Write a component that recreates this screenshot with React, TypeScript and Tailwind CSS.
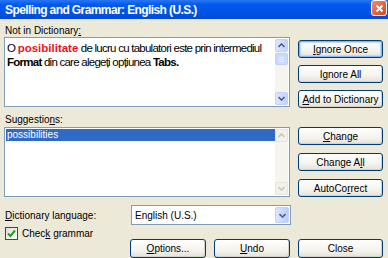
import { ReactNode } from 'react';

const uiFont = { fontFamily: '"Liberation Sans", Arial, sans-serif' };

function Btn({ children, focused = false, className = '' }: { children: ReactNode; focused?: boolean; className?: string }) {
  return (
    <div
      className={`h-[18px] rounded-[3px] border border-[#003c74] bg-[linear-gradient(180deg,#ffffff_0%,#f4f3ee_60%,#e3e1d7_100%)] flex items-center justify-center text-[10px] text-black whitespace-nowrap ${
        focused ? 'shadow-[inset_0_0_0_1px_#8fb3f0,inset_0_0_0_2px_#c6d8f8]' : 'shadow-[inset_-1px_-1px_0_#d6d0c5]'
      } ${className}`}
    >
      {children}
    </div>
  );
}

function Arrow({ up, disabled = false }: { up: boolean; disabled?: boolean }) {
  const color = disabled ? '#c9c7ba' : '#4d6185';
  return (
    <div
      className={`h-[13px] rounded-[2px] border flex items-center justify-center ${
        disabled ? 'border-[#e8e6dc] bg-[#f2f1ea]' : 'border-[#c2d1f5] bg-[linear-gradient(90deg,#dce7fd,#c1d3fb)]'
      }`}
    >
      <svg width="7" height="5" viewBox="0 0 7 5">
        <path d={up ? 'M0.5 4L3.5 1L6.5 4' : 'M0.5 1L3.5 4L6.5 1'} fill="none" stroke={color} strokeWidth="1.6" />
      </svg>
    </div>
  );
}

function ScrollBar({ disabled = false }: { disabled?: boolean }) {
  return (
    <div className="w-[13px] flex flex-col bg-[#f5f4ef] my-[1px] mr-[1px]">
      <Arrow up disabled={disabled} />
      {!disabled && (
        <div className="mt-[1px] h-[12px] rounded-[2px] border border-[#c2d1f5] bg-[#cbd9fb] flex flex-col items-center justify-center gap-[1px]">
          <div className="w-[5px] h-px bg-[#eef3fe]" />
          <div className="w-[5px] h-px bg-[#eef3fe]" />
          <div className="w-[5px] h-px bg-[#eef3fe]" />
        </div>
      )}
      <div className="flex-1" />
      <Arrow up={false} disabled={disabled} />
    </div>
  );
}

export default function App() {
  return (
    <div className="w-[388px] h-[258px] bg-[#ece9d8] overflow-hidden flex flex-col" style={uiFont}>
      {/* Title bar */}
      <div className="h-[20px] bg-[linear-gradient(180deg,#2a77f0_0%,#0058ee_25%,#0054e3_70%,#0049d6_100%)] flex items-center justify-between pl-[5px] pr-[1px]">
        <span className="text-white font-bold text-[12px] tracking-[-0.6px] whitespace-nowrap">
          Spelling and Grammar: English (U.S.)
        </span>
        <div className="w-[16px] h-[16px] -mt-[3px] rounded-[3px] border border-white bg-[linear-gradient(135deg,#f08a6c,#d9441c)] flex items-center justify-center">
          <svg width="9" height="9" viewBox="0 0 9 9">
            <path d="M1.5 1.5L7.5 7.5M7.5 1.5L1.5 7.5" stroke="white" strokeWidth="1.8" />
          </svg>
        </div>
      </div>

      <div className="pl-[4px] pr-[5px] flex flex-col text-[10px] text-black">
        {/* Not in Dictionary */}
        <div className="h-[12px] mt-[6px] leading-[12px] pl-[1px]">
          Not in Dictionary<span className="underline">:</span>
        </div>
        <div className="flex gap-[8px]">
          <div className="w-[286px] h-[70px] border border-[#7f9db9] bg-white flex">
            <div className="flex-1 pl-[2px] pt-[3px] text-[11.5px] leading-[14px] tracking-[-0.75px]">
              O <span className="text-[#e8141e] font-bold tracking-[0px]">posibilitate</span> de lucru cu tabulatori este prin intermediul{' '}
              <span className="font-bold">Format</span> din care alegeți opțiunea <span className="font-bold">Tabs.</span>
            </div>
            <ScrollBar />
          </div>
          <div className="w-[85px] pt-[3px] flex flex-col gap-[7px]">
            <Btn focused>
              <span><span className="underline">I</span>gnore Once</span>
            </Btn>
            <Btn>
              <span>I<span className="underline">g</span>nore All</span>
            </Btn>
            <Btn>
              <span><span className="underline">A</span>dd to Dictionary</span>
            </Btn>
          </div>
        </div>

        {/* Suggestions */}
        <div className="h-[12px] mt-[6px] leading-[12px] pl-[1px]">
          Suggestio<span className="underline">n</span>s:
        </div>
        <div className="flex gap-[8px] mt-[1px]">
          <div className="w-[286px] h-[70px] border border-[#7f9db9] bg-white flex">
            <div className="flex-1 pt-[1px] pl-[1px]">
              <div className="h-[12px] bg-[#316ac5] text-white leading-[12px] pl-[1px]">possibilities</div>
            </div>
            <ScrollBar disabled />
          </div>
          <div className="w-[85px] flex flex-col gap-[8px]">
            <Btn>
              <span><span className="underline">C</span>hange</span>
            </Btn>
            <Btn>
              <span>Change A<span className="underline">l</span>l</span>
            </Btn>
            <Btn>
              <span>AutoCo<span className="underline">r</span>rect</span>
            </Btn>
          </div>
        </div>

        {/* Dictionary language */}
        <div className="flex items-center mt-[8px]">
          <div className="w-[127px] pl-[1px]">
            <span className="underline">D</span>ictionary language:
          </div>
          <div className="w-[160px] h-[20px] border border-[#7f9db9] bg-white flex items-center">
            <span className="flex-1 pl-[3px]">English (U.S.)</span>
            <div className="w-[14px] h-[16px] mr-[1px] rounded-[2px] border border-[#c2d1f5] bg-[linear-gradient(90deg,#dce7fd,#b9cdf9)] flex items-center justify-center">
              <svg width="7" height="5" viewBox="0 0 7 5">
                <path d="M0.5 1L3.5 4L6.5 1" fill="none" stroke="#4d6185" strokeWidth="1.6" />
              </svg>
            </div>
          </div>
        </div>

        <div className="flex">
          <div className="w-[127px] pt-[2px] flex items-start gap-[4px] pl-[1px]">
            <div className="w-[13px] h-[13px] border border-[#1c5180] bg-[linear-gradient(135deg,#dcdcd5,#ffffff)] flex items-center justify-center">
              <svg width="9" height="9" viewBox="0 0 9 9">
                <path d="M1 4.5L3.5 7L8 1.5" fill="none" stroke="#21a121" strokeWidth="2" />
              </svg>
            </div>
            <span className="leading-[13px]">
              Chec<span className="underline">k</span> grammar
            </span>
          </div>
          <div className="flex gap-[8px] mt-[14px]">
            <Btn className="w-[76px] h-[19px]">
              <span><span className="underline">O</span>ptions...</span>
            </Btn>
            <Btn className="w-[76px] h-[19px]">
              <span><span className="underline">U</span>ndo</span>
            </Btn>
            <Btn className="w-[85px] h-[19px]">
              <span>Close</span>
            </Btn>
          </div>
        </div>
      </div>
    </div>
  );
}
